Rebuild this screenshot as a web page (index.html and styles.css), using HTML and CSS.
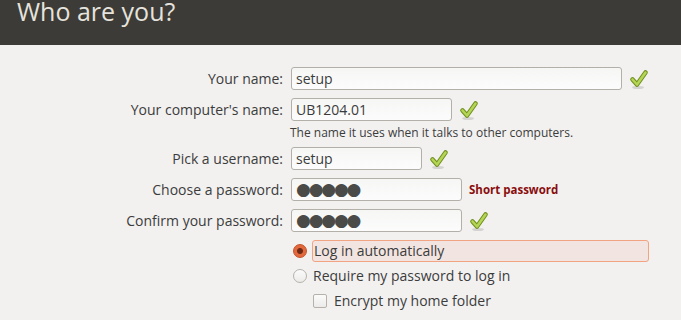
FILE: index.html
```html
<!DOCTYPE html>
<html lang="en">
<head>
  <meta charset="UTF-8" />
  <title>Who are you?</title>
  <link rel="stylesheet" href="styles.css">
</head>
<body>
  <header class="title-bar">
    <h1>Who are you?</h1>
  </header>

  <main class="form">
    <label class="label">Your name:</label>
    <div class="field-row">
      <div class="entry w-name">setup</div>
      <svg class="ok" viewBox="0 0 20 20"><ellipse cx="9" cy="18.5" rx="6" ry="1.6" fill="#000" opacity="0.12"/><path d="M3.5 10.5 L8 15.5 L16.5 3.5" fill="none" stroke="#6f8f1c" stroke-width="4.6" stroke-linecap="round" stroke-linejoin="round"/><path d="M3.5 10.5 L8 15.5 L16.5 3.5" fill="none" stroke="#b4d455" stroke-width="2.6" stroke-linecap="round" stroke-linejoin="round"/></svg>
    </div>

    <label class="label">Your computer's name:</label>
    <div class="field-row">
      <div class="entry w-computer">UB1204.01</div>
      <svg class="ok" viewBox="0 0 20 20"><ellipse cx="9" cy="18.5" rx="6" ry="1.6" fill="#000" opacity="0.12"/><path d="M3.5 10.5 L8 15.5 L16.5 3.5" fill="none" stroke="#6f8f1c" stroke-width="4.6" stroke-linecap="round" stroke-linejoin="round"/><path d="M3.5 10.5 L8 15.5 L16.5 3.5" fill="none" stroke="#b4d455" stroke-width="2.6" stroke-linecap="round" stroke-linejoin="round"/></svg>
    </div>

    <p class="hint">The name it uses when it talks to other computers.</p>

    <label class="label">Pick a username:</label>
    <div class="field-row">
      <div class="entry w-user">setup</div>
      <svg class="ok" viewBox="0 0 20 20"><ellipse cx="9" cy="18.5" rx="6" ry="1.6" fill="#000" opacity="0.12"/><path d="M3.5 10.5 L8 15.5 L16.5 3.5" fill="none" stroke="#6f8f1c" stroke-width="4.6" stroke-linecap="round" stroke-linejoin="round"/><path d="M3.5 10.5 L8 15.5 L16.5 3.5" fill="none" stroke="#b4d455" stroke-width="2.6" stroke-linecap="round" stroke-linejoin="round"/></svg>
    </div>

    <label class="label">Choose a password:</label>
    <div class="field-row">
      <div class="entry w-pass dots">●●●●●</div>
      <span class="warning">Short password</span>
    </div>

    <label class="label">Confirm your password:</label>
    <div class="field-row">
      <div class="entry w-pass dots">●●●●●</div>
      <svg class="ok" viewBox="0 0 20 20"><ellipse cx="9" cy="18.5" rx="6" ry="1.6" fill="#000" opacity="0.12"/><path d="M3.5 10.5 L8 15.5 L16.5 3.5" fill="none" stroke="#6f8f1c" stroke-width="4.6" stroke-linecap="round" stroke-linejoin="round"/><path d="M3.5 10.5 L8 15.5 L16.5 3.5" fill="none" stroke="#b4d455" stroke-width="2.6" stroke-linecap="round" stroke-linejoin="round"/></svg>
    </div>

    <div class="options">
      <div class="option">
        <span class="radio checked"></span>
        <span class="option-text focused">Log in automatically</span>
      </div>
      <div class="option">
        <span class="radio"></span>
        <span class="option-text">Require my password to log in</span>
      </div>
      <div class="option sub">
        <span class="checkbox"></span>
        <span class="option-text">Encrypt my home folder</span>
      </div>
    </div>
  </main>
</body>
</html>
```
FILE: styles.css
```css
html, body {
  margin: 0;
  padding: 0;
}

body {
  background: #f2f1f0;
  color: #3c3c3c;
  font-family: "Open Sans", "DejaVu Sans", sans-serif;
  font-size: 14px;
  width: 681px;
  height: 320px;
  overflow: hidden;
}

.title-bar {
  background: #3c3b37;
  height: 45px;
  overflow: hidden;
}

.title-bar h1 {
  margin: 0 0 0 17px;
  font-weight: normal;
  font-size: 25px;
  line-height: 22px;
  color: #e6e3dc;
}

.form {
  display: grid;
  grid-template-columns: 283px auto;
  column-gap: 8px;
  row-gap: 8px;
  padding-top: 22px;
}

.label {
  text-align: right;
  line-height: 23px;
  height: 23px;
}

.field-row {
  display: flex;
  align-items: center;
  gap: 7px;
  height: 23px;
}

.entry {
  box-sizing: border-box;
  height: 23px;
  padding: 0 4px;
  line-height: 21px;
  border: 1px solid #b3b0aa;
  border-radius: 3px;
  background: linear-gradient(#f6f6f5, #fcfcfc);
}

.w-name { width: 331px; }
.w-computer { width: 161px; }
.w-user { width: 131px; }
.w-pass { width: 171px; }

.dots {
  font-family: "DejaVu Sans", sans-serif;
  font-size: 17px;
  letter-spacing: -2.2px;
  color: #4a4a48;
}

.ok {
  width: 20px;
  height: 20px;
}

.warning {
  font-weight: bold;
  font-size: 11.5px;
  color: #8a0d0d;
}

.hint {
  grid-column: 2;
  margin: -3px 0 0 -1px;
  font-size: 12px;
  line-height: 13px;
}

.options {
  grid-column: 2;
  display: flex;
  flex-direction: column;
  gap: 3px;
}

.option {
  display: flex;
  align-items: center;
  gap: 5px;
  height: 22px;
  padding-left: 2px;
}

.option.sub {
  padding-left: 22px;
  gap: 6px;
}

.option-text {
  font-size: 14px;
  line-height: 20px;
  padding-left: 1px;
}

.option-text.focused {
  box-sizing: border-box;
  width: 337px;
  height: 22px;
  border: 1px solid #f2a382;
  border-radius: 3px;
  background: #f2e5e1;
}

.radio {
  box-sizing: border-box;
  width: 14px;
  height: 14px;
  border-radius: 50%;
  border: 1px solid #b6b2ab;
  background: linear-gradient(#fbfbfb, #ecebe9);
}

.radio.checked {
  border-color: #c4502a;
  background: radial-gradient(circle, #6e2a16 0 2.5px, #e2693b 3.5px 100%);
}

.checkbox {
  box-sizing: border-box;
  width: 14px;
  height: 14px;
  border: 1px solid #b6b2ab;
  border-radius: 2px;
  background: linear-gradient(#fbfbfb, #ecebe9);
}
```
